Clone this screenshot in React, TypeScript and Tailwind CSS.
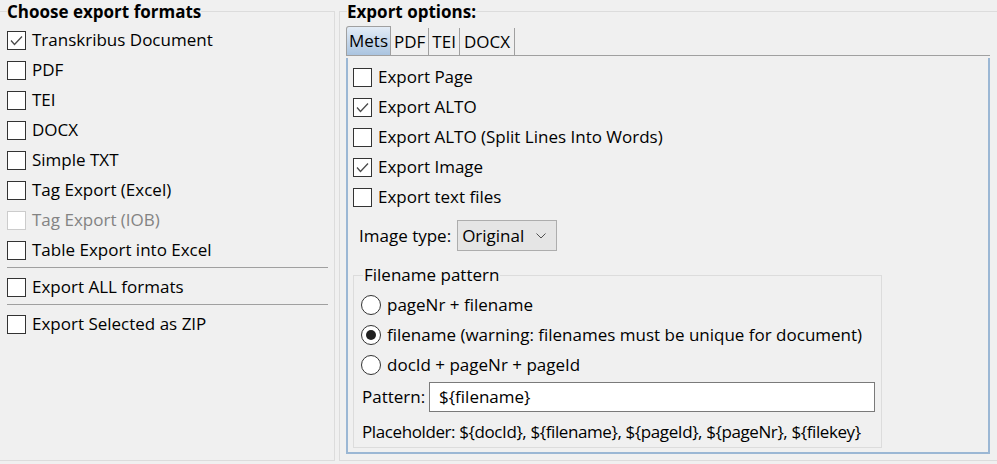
import React from 'react'

const font = { fontFamily: '"Open Sans", "Noto Sans", sans-serif' }

const Check = ({ checked, disabled }: { checked?: boolean; disabled?: boolean }) => (
	<span
		className={`flex h-[19px] w-[19px] shrink-0 items-center justify-center border bg-white ${
			disabled ? 'border-[#cccccc]' : 'border-[#333333]'
		}`}
	>
		{checked && (
			<svg width="13" height="11" viewBox="0 0 13 11">
				<polyline points="1,5.5 4.5,9.5 12,1.5" fill="none" stroke="#4a4a4a" strokeWidth="1.3" />
			</svg>
		)}
	</span>
)

const CheckRow = ({ label, checked, disabled }: { label: string; checked?: boolean; disabled?: boolean }) => (
	<div className="flex h-[30px] items-center gap-[6px]">
		<Check checked={checked} disabled={disabled} />
		<span className={disabled ? 'text-[#838383]' : 'text-black'}>{label}</span>
	</div>
)

const Radio = ({ label, checked }: { label: string; checked?: boolean }) => (
	<div className="flex h-[30px] items-center gap-[6px]">
		<span className="flex h-[20px] w-[20px] shrink-0 items-center justify-center rounded-full border border-[#333333] bg-white">
			{checked && <span className="h-[10px] w-[10px] rounded-full bg-[#202020]" />}
		</span>
		<span>{label}</span>
	</div>
)

const formats = [
	{ label: 'Transkribus Document', checked: true },
	{ label: 'PDF' },
	{ label: 'TEI' },
	{ label: 'DOCX' },
	{ label: 'Simple TXT' },
	{ label: 'Tag Export (Excel)' },
	{ label: 'Tag Export (IOB)', disabled: true },
	{ label: 'Table Export into Excel' },
]

const metsOptions = [
	{ label: 'Export Page' },
	{ label: 'Export ALTO', checked: true },
	{ label: 'Export ALTO (Split Lines Into Words)' },
	{ label: 'Export Image', checked: true },
	{ label: 'Export text files' },
]

const App: React.FC = () => {
	return (
		<div
			className="flex h-[464px] w-[997px] overflow-hidden bg-[#f0f0f0] pt-[1px] text-[17px] leading-[20px] text-black"
			style={font}
		>
			{/* left group */}
			<fieldset className="ml-[-1px] h-[460px] w-[336px] shrink-0 border border-[#dcdcdc] pl-[7px] pr-[6px]">
				<legend className="font-bold leading-[21px]">Choose export formats</legend>
				<div className="pt-[3px]">
					{formats.map((f, i) => (
						<CheckRow key={i} label={f.label} checked={f.checked} disabled={f.disabled} />
					))}
					<div className="mt-[2px] mb-[4px] h-px bg-[#a0a0a0]" />
					<CheckRow label="Export ALL formats" />
					<div className="mt-[2px] mb-[4px] h-px bg-[#a0a0a0]" />
					<CheckRow label="Export Selected as ZIP" />
				</div>
			</fieldset>

			{/* right group */}
			<fieldset className="ml-[4px] h-[460px] w-[670px] shrink-0 border border-[#dcdcdc] pl-[6px]">
				<legend className="ml-[1px] font-bold leading-[21px]">Export options:</legend>
				<div className="mt-[5px] flex h-[29px] w-[644px] items-end border-b border-[#a0a0a0]">
					<div className="flex h-[29px] items-center rounded-tl-[3px] border border-b-0 border-[#a0a0a0] bg-gradient-to-b from-[#e3ecf6] to-[#aac4e0] px-[2px]">
						Mets
					</div>
					<div className="flex h-[27px] items-center border-r border-[#a0a0a0] px-[3px]">PDF</div>
					<div className="flex h-[27px] items-center border-r border-[#a0a0a0] px-[3px]">TEI</div>
					<div className="flex h-[27px] items-center border-r border-[#a0a0a0] px-[4px]">DOCX</div>
				</div>
				<div className="mt-[2px] h-[396px] w-[644px] border-x-2 border-b-2 border-[#9bb7d4] pl-[5px] pt-[4px]">
					{metsOptions.map((o, i) => (
						<CheckRow key={i} label={o.label} checked={o.checked} />
					))}
					<div className="mt-[8px] flex items-center gap-[6px] pl-[6px]">
						<span>Image type:</span>
						<div className="flex h-[31px] w-[100px] items-center justify-between border border-[#adadad] bg-[#e5e5e5] pl-[4px] pr-[10px]">
							<span>Original</span>
							<svg width="10" height="6" viewBox="0 0 10 6">
								<polyline points="0.5,0.5 5,5 9.5,0.5" fill="none" stroke="#505050" strokeWidth="1" />
							</svg>
						</div>
					</div>
					<fieldset className="mt-[14px] w-[529px] border border-[#dcdcdc] pb-[5px] pl-[7px] pr-[6px]">
						<legend className="ml-[2px] px-[1px]">Filename pattern</legend>
						<div className="pt-[5px]">
							<Radio label="pageNr + filename" />
							<Radio label="filename (warning: filenames must be unique for document)" checked />
							<Radio label="docId + pageNr + pageId" />
						</div>
						<div className="mt-[2px] flex items-center pl-[1px]">
							<span className="w-[67px]">Pattern:</span>
							<div className="flex h-[30px] w-[446px] items-center border border-[#7a7a7a] bg-white pl-[9px]">
								{'${filename}'}
							</div>
						</div>
						<div className="mt-[10px] whitespace-nowrap pl-[1px] tracking-[-0.4px]">
							{'Placeholder: ${docId}, ${filename}, ${pageId}, ${pageNr}, ${filekey}'}
						</div>
					</fieldset>
				</div>
			</fieldset>
		</div>
	)
}

export default App
